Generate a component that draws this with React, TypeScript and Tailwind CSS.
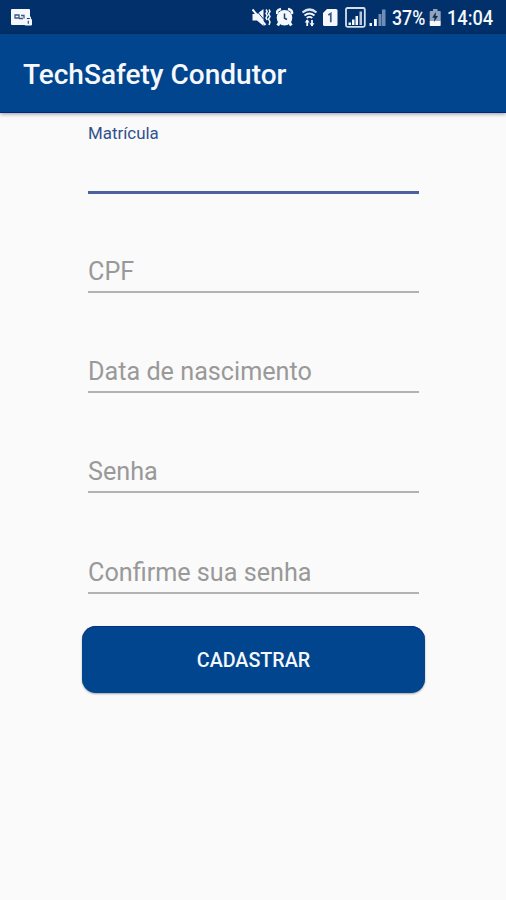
import React from "react";

const WHITE = "#f4f7fc";

function GalleryLockIcon() {
  return (
    <svg className="ml-[11px]" width="22" height="34" viewBox="11 0 22 34" fill={WHITE}>
      <path d="M12 9h17a1 1 0 0 1 1 1v8h-4v7H12a1 1 0 0 1-1-1V10a1 1 0 0 1 1-1z" />
      <path d="M15 15h4v3h-4zM21 15.500h3v3M19 18.500h4" fill="none" stroke="#3a5a88" strokeWidth="1.300" />
      <path d="M26.200 19.500v-1a2.100 2.100 0 0 1 4.200 0v1" fill="none" stroke={WHITE} strokeWidth="1.300" />
      <rect x="24.500" y="19" width="7.500" height="6.500" rx="1" />
      <path d="M28.300 20.700v3" stroke="#2d4f80" strokeWidth="1.200" />
    </svg>
  );
}

function MuteIcon() {
  return (
    <svg width="19" height="34" viewBox="252 0 19 34" fill={WHITE}>
      <path d="M252.500 14h4.500l6.500-5v17l-6.500-5.500h-4.500z" />
      <path d="M255.500 9.500l8 9.500" stroke="#01306a" strokeWidth="0.900" />
      <path d="M252.500 9.500l13 15.500" stroke={WHITE} strokeWidth="2" />
      <path d="M266 9.500l1.200 2-1.200 2 1.200 2-1.200 2.500 1.200 2M269 9.500l1 2-1.500 2.500 1.500 2.500-1.500 2.500 1.500 3-1 3" fill="none" stroke={WHITE} strokeWidth="1.500" />
    </svg>
  );
}

function AlarmIcon() {
  return (
    <svg className="ml-[5px]" width="18" height="34" viewBox="276 0 18 34" fill={WHITE}>
      <circle cx="284.500" cy="17.800" r="7.800" />
      <path d="M277 14q-.8-4 4-5M292 14q.8-4-4-5" fill="none" stroke={WHITE} strokeWidth="2.400" />
      <path d="M279.500 22.500l-1.800 3M289.500 22.500l1.800 3" stroke={WHITE} strokeWidth="3" />
      <path d="M284.500 13.500v4.800l2.500 1.200" fill="none" stroke="#123f78" strokeWidth="1.500" />
    </svg>
  );
}

function WifiIcon() {
  return (
    <svg className="ml-[8px]" width="16" height="34" viewBox="302 0 16 34" fill="none" stroke={WHITE}>
      <path d="M302.500 12.500q7-6 14 0" strokeWidth="2.300" opacity=".9" />
      <path d="M304.500 15.500q5-4 10 0" strokeWidth="1.900" />
      <path d="M306.700 18q2.800-2.200 5.600 0" strokeWidth="1.800" />
      <path d="M307.200 26v-6M312 20v6" strokeWidth="1.800" />
      <path d="M304.700 22.500l2.500-3.200 2.500 3.200zM309.500 23.300l2.500 3.200 2.500-3.200z" fill={WHITE} stroke="none" />
    </svg>
  );
}

function SimIcon() {
  return (
    <svg className="ml-[5px]" width="15" height="34" viewBox="323 0 15 34">
      <path d="M327 9h9q1.500 0 1.500 1.500v14q0 1.500-1.500 1.500h-11.500q-1.500 0-1.500-1.500V13z" fill={WHITE} />
      <path d="M328.300 15l2.500-1.500v8.700" fill="none" stroke="#35588a" strokeWidth="1.700" />
    </svg>
  );
}

function BoxedSignalIcon() {
  return (
    <svg className="ml-[7px]" width="21" height="34" viewBox="345 0 21 34">
      <rect x="346" y="8" width="18.800" height="18.800" rx="1.500" fill="none" stroke="#d5dfec" strokeWidth="1.800" />
      <path d="M348.500 22.500h2.500v2.500h-2.500zM352 19.500h2.500v5.500h-2.500zM355.500 16h2.500v9h-2.500z" fill={WHITE} />
      <path d="M359.500 11.500h2.500V25h-2.500z" fill="#b9c7da" />
    </svg>
  );
}

function SignalIcon() {
  return (
    <svg className="ml-[3px]" width="17" height="34" viewBox="369 0 17 34">
      <path d="M369.500 23h2.500v3h-2.500zM374 19h2.800v7H374z" fill={WHITE} />
      <path d="M378.500 14h3V26h-3zM382 9.500h3.500v16.500h-3.500z" fill="#6f8db5" />
    </svg>
  );
}

function BatteryIcon() {
  return (
    <svg className="ml-[4px]" width="12" height="34" viewBox="429 0 12 34">
      <path d="M433 9h4.500v2h2.500q.7 0 .7.700V21H429.700v-9.300q0-.7.700-.7H433z" fill="#8fa3bf" />
      <path d="M429.700 21h11v4.300q0 .7-.7.700h-9.600q-.7 0-.7-.7z" fill={WHITE} />
      <path d="M435.800 12l-3.600 5.800h2.300l-.5 4.200 4-6h-2.300z" fill="#122b4c" />
    </svg>
  );
}

function StatusBar() {
  return (
    <div className="flex h-[34px] items-center bg-[#01306a] text-[20px] leading-[34px] text-[#f4f7fc]">
      <GalleryLockIcon />
      <div className="flex-1" />
      <MuteIcon />
      <AlarmIcon />
      <WifiIcon />
      <SimIcon />
      <BoxedSignalIcon />
      <SignalIcon />
      <span className="ml-[6px] mt-[2px] w-[33px] whitespace-nowrap">
        <span className="inline-block origin-left scale-x-[0.89] font-medium">37%</span>
      </span>
      <BatteryIcon />
      <span className="ml-[6px] mr-[12px] mt-[2px] w-[47px] whitespace-nowrap">
        <span className="inline-block origin-left scale-x-[0.91] font-medium">14:04</span>
      </span>
    </div>
  );
}

function Field({ label }: { label: string }) {
  return (
    <div className="flex h-[100.3px] flex-col justify-end">
      <div className="pb-[4px] text-[25.2px] leading-[30px] text-[#999999]">{label}</div>
      <div className="h-[2px] bg-[#b2b2b2]" />
    </div>
  );
}

export default function App() {
  return (
    <div className="flex h-[900px] w-[506px] flex-col overflow-hidden bg-[#fafafa] font-['Roboto','Noto_Sans',sans-serif]">
      <StatusBar />
      <header className="flex h-[79px] items-center bg-[#00458d] pl-[23px] pt-[3px] text-[28px] font-medium text-[#f6f8fd] shadow-[inset_0_-1px_0_#002b7c,0_1px_4px_rgba(0,0,0,0.4)]">
        TechSafety Condutor
      </header>
      <main className="ml-[88px] w-[331px]">
        <div className="flex h-[81px] flex-col justify-between pt-[9px]">
          <div className="text-[16.9px] leading-[22px] text-[#31528f]">Matrícula</div>
          <div className="h-[3px] bg-[#4c619d]" />
        </div>
        <div className="-mt-[1.7px]">
          <Field label="CPF" />
          <Field label="Data de nascimento" />
          <Field label="Senha" />
          <Field label="Confirme sua senha" />
        </div>
        <button className="-ml-[6px] mt-[32.5px] flex h-[67px] w-[343px] items-center justify-center rounded-[14px] bg-[#00458d] pt-[2px] text-[19.7px] font-medium text-[#f4f7fc] shadow-[inset_0_1px_0_#06318a,0_1px_2px_rgba(0,0,0,0.35)]">
          CADASTRAR
        </button>
      </main>
    </div>
  );
}
